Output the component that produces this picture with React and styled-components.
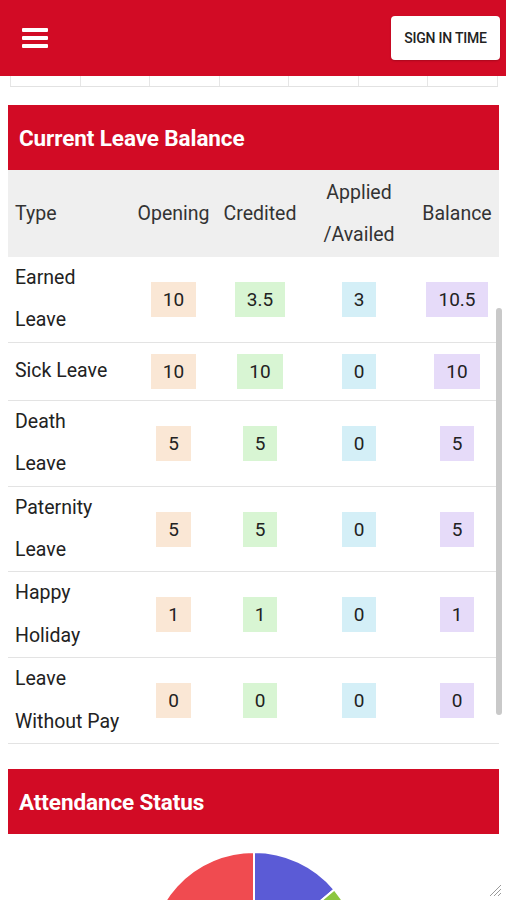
import React from 'react'
import styled, { createGlobalStyle } from 'styled-components'

const GlobalStyle = createGlobalStyle`
  html, body {
    margin: 0;
    padding: 0;
    overflow: hidden;
    background: #ffffff;
    font-family: Roboto, "Liberation Sans", sans-serif;
    color: #222;
  }
`

const RED = '#d20b25'

const leaves = [
    { type: ['Earned', 'Leave'], opening: '10', credited: '3.5', applied: '3', balance: '10.5' },
    { type: ['Sick Leave'], opening: '10', credited: '10', applied: '0', balance: '10' },
    { type: ['Death', 'Leave'], opening: '5', credited: '5', applied: '0', balance: '5' },
    { type: ['Paternity', 'Leave'], opening: '5', credited: '5', applied: '0', balance: '5' },
    { type: ['Happy', 'Holiday'], opening: '1', credited: '1', applied: '0', balance: '1' },
    { type: ['Leave', 'Without Pay'], opening: '0', credited: '0', applied: '0', balance: '0' },
]

const badgeColors = {
    opening: '#fae7d5',
    credited: '#d8f5d3',
    applied: '#d4eff7',
    balance: '#e6dbf9',
}

const slices = [
    { from: 0, to: 50, color: '#5b5bd6' },
    { from: 50, to: 100, color: '#8cc63f' },
    { from: 100, to: 170, color: '#f4b400' },
    { from: 170, to: 360, color: '#f04b50' },
]

const arcPath = (cx, cy, r, from, to) => {
    const rad = (a) => ((a - 90) * Math.PI) / 180
    const x1 = cx + r * Math.cos(rad(from))
    const y1 = cy + r * Math.sin(rad(from))
    const x2 = cx + r * Math.cos(rad(to))
    const y2 = cy + r * Math.sin(rad(to))
    const large = to - from > 180 ? 1 : 0
    return `M${cx} ${cy} L${x1} ${y1} A${r} ${r} 0 ${large} 1 ${x2} ${y2} Z`
}

const App = () => {
    return (
        <>
            <GlobalStyle />
            <TopBar>
                <MenuButton aria-label="menu">
                    <span />
                    <span />
                    <span />
                </MenuButton>
                <SignInButton>Sign In Time</SignInButton>
            </TopBar>

            <ScrolledStrip>
                {Array.from({ length: 7 }).map((_, i) => (
                    <StripCell key={i} />
                ))}
            </ScrolledStrip>

            <Card>
                <CardTitle>Current Leave Balance</CardTitle>
                <HeadRow>
                    <HeadCell $left>Type</HeadCell>
                    <HeadCell>Opening</HeadCell>
                    <HeadCell>Credited</HeadCell>
                    <HeadCell>
                        Applied
                        <br />
                        /Availed
                    </HeadCell>
                    <HeadCell $last>Balance</HeadCell>
                </HeadRow>
                <Body>
                    {leaves.map((row) => (
                        <Row key={row.type.join(' ')}>
                            <TypeCell>
                                {row.type.map((t, i) => (
                                    <div key={i}>{t}</div>
                                ))}
                            </TypeCell>
                            <Cell>
                                <Badge $bg={badgeColors.opening}>{row.opening}</Badge>
                            </Cell>
                            <Cell>
                                <Badge $bg={badgeColors.credited}>{row.credited}</Badge>
                            </Cell>
                            <Cell>
                                <Badge $bg={badgeColors.applied}>{row.applied}</Badge>
                            </Cell>
                            <Cell $last>
                                <Badge $bg={badgeColors.balance}>{row.balance}</Badge>
                            </Cell>
                        </Row>
                    ))}
                    <ScrollThumb />
                </Body>
            </Card>

            <Card $gap={25}>
                <CardTitle>Attendance Status</CardTitle>
                <ChartArea>
                    <svg width="220" height="220" viewBox="0 0 220 220">
                        {slices.map((s) => (
                            <path
                                key={s.from}
                                d={arcPath(110, 110, 105, s.from, s.to)}
                                fill={s.color}
                                stroke="#fff"
                                strokeWidth="2"
                            />
                        ))}
                    </svg>
                    <ResizeGrip width="14" height="14" viewBox="0 0 14 14">
                        <line x1="13" y1="2" x2="2" y2="13" stroke="#9a9a9a" strokeWidth="1" />
                        <line x1="13" y1="6" x2="6" y2="13" stroke="#9a9a9a" strokeWidth="1" />
                        <line x1="13" y1="10" x2="10" y2="13" stroke="#9a9a9a" strokeWidth="1" />
                    </ResizeGrip>
                </ChartArea>
            </Card>
        </>
    )
}

export default App

const TopBar = styled.header`
    height: 76px;
    background: ${RED};
    display: flex;
    align-items: center;
    justify-content: space-between;
    padding: 0 6px 0 22px;
`

const MenuButton = styled.button`
    background: transparent;
    border: none;
    padding: 0;
    width: 26px;
    display: flex;
    flex-direction: column;
    gap: 4px;
    cursor: pointer;

    span {
        display: block;
        height: 4px;
        border-radius: 1px;
        background: #fff;
    }
`

const SignInButton = styled.button`
    width: 109px;
    height: 44px;
    background: #fff;
    border: none;
    border-radius: 4px;
    box-shadow: 0 1px 2px rgba(0, 0, 0, 0.2);
    font-family: Roboto, "Liberation Sans", sans-serif;
    font-size: 14px;
    font-weight: 500;
    color: #222;
    text-transform: uppercase;
    letter-spacing: -0.2px;
    cursor: pointer;
`

const ScrolledStrip = styled.div`
    display: grid;
    grid-template-columns: 70px 69px 70px 69px 70px 69px 1fr;
    height: 10px;
    margin: 0 8px 0 10px;
    border-bottom: 1px solid #e2e2e2;
`

const StripCell = styled.div`
    border-left: 1px solid #e6e6e6;

    &:last-child {
        border-right: 1px solid #e6e6e6;
    }
`

const Card = styled.section`
    margin: ${(p) => (p.$gap ? `${p.$gap}px` : '18px')} 7px 0 8px;
`

const CardTitle = styled.h2`
    margin: 0;
    height: 65px;
    display: flex;
    align-items: center;
    padding-left: 11px;
    background: ${RED};
    color: #fff;
    font-size: 22.5px;
    font-weight: 700;
    letter-spacing: -0.1px;
`

const columns = '127px 77px 96px 102px 1fr'

const HeadRow = styled.div`
    display: grid;
    grid-template-columns: ${columns};
    align-items: center;
    height: 87px;
    background: #efefef;
`

const HeadCell = styled.div`
    font-size: 19.5px;
    line-height: 42px;
    color: #333;
    text-align: ${(p) => (p.$left ? 'left' : 'center')};
    padding-left: ${(p) => (p.$left ? '7px' : p.$last ? '5px' : '0')};
`

const Body = styled.div`
    position: relative;
`

const Row = styled.div`
    display: grid;
    grid-template-columns: ${columns};
    align-items: center;
    min-height: 57px;
    border-bottom: 1px solid #e3e3e3;
`

const TypeCell = styled.div`
    font-size: 19.5px;
    line-height: 42.4px;
    padding-left: 7px;
    color: #222;
`

const Cell = styled.div`
    display: flex;
    justify-content: center;
    padding-left: ${(p) => (p.$last ? '5px' : '0')};
`

const Badge = styled.span`
    display: inline-block;
    height: 35px;
    line-height: 35px;
    padding: 0 12px;
    background: ${(p) => p.$bg};
    font-size: 19px;
    color: #222;
`

const ScrollThumb = styled.div`
    position: absolute;
    right: -3px;
    top: 51px;
    width: 6px;
    height: 407px;
    border-radius: 3px;
    background: #c9c9c9;
`

const ChartArea = styled.div`
    position: relative;
    display: flex;
    justify-content: center;
    padding-top: 13px;
`

const ResizeGrip = styled.svg`
    position: absolute;
    right: -3px;
    top: 49px;
`
